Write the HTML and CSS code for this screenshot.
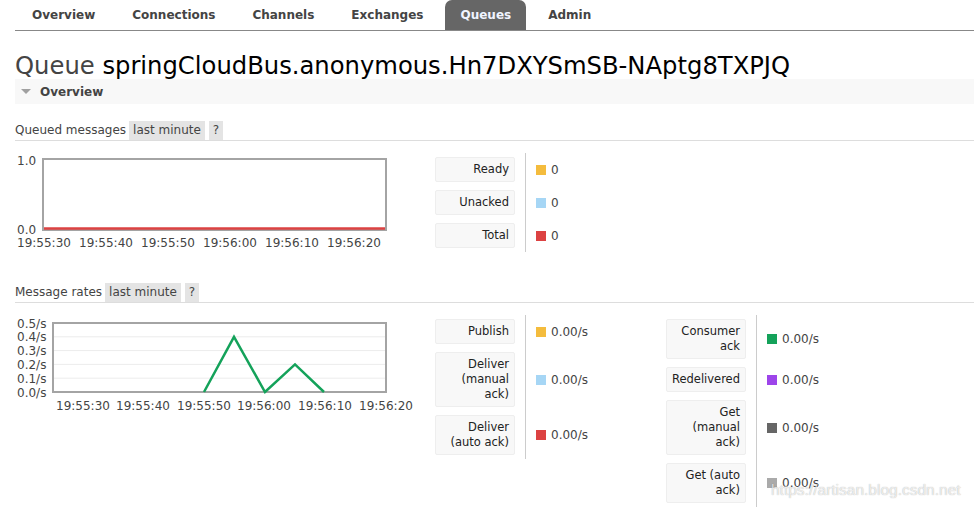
FILE: index.html
```html
<!DOCTYPE html>
<html lang="en">
<head>
<meta charset="utf-8">
<title>Queue springCloudBus.anonymous.Hn7DXYSmSB-NAptg8TXPJQ</title>
<link rel="stylesheet" href="styles.css">
</head>
<body>
<ul class="nav">
  <li class="tab">Overview</li>
  <li class="tab">Connections</li>
  <li class="tab">Channels</li>
  <li class="tab">Exchanges</li>
  <li class="tab tab-active">Queues</li>
  <li class="tab">Admin</li>
</ul>

<h1 class="title">Queue <span class="title-name">springCloudBus.anonymous.Hn7DXYSmSB-NAptg8TXPJQ</span></h1>

<div class="section-bar"><span class="tri"></span>Overview</div>

<div class="subhead"><span>Queued messages</span><span class="pill">last minute</span><span class="pill pill-help">?</span></div>
<div class="panel">
  <div class="chart">
    <svg width="375" height="100" viewBox="0 0 375 100">
      <rect class="frame" x="28" y="6" width="343" height="71"/>
      <line class="line-red" x1="29" y1="75.5" x2="370" y2="75.5"/>
      <text class="axis" x="2" y="12">1.0</text>
      <text class="axis" x="2" y="81">0.0</text>
      <text class="axis" x="2" y="94">19:55:30</text>
      <text class="axis" x="64" y="94">19:55:40</text>
      <text class="axis" x="126" y="94">19:55:50</text>
      <text class="axis" x="188" y="94">19:56:00</text>
      <text class="axis" x="250" y="94">19:56:10</text>
      <text class="axis" x="312" y="94">19:56:20</text>
    </svg>
  </div>
  <div class="stat-table">
    <div class="stat-row"><div class="stat-label">Ready</div><div class="stat-value"><span class="swatch c-yellow"></span>0</div></div>
    <div class="stat-row"><div class="stat-label">Unacked</div><div class="stat-value"><span class="swatch c-blue"></span>0</div></div>
    <div class="stat-row"><div class="stat-label">Total</div><div class="stat-value"><span class="swatch c-red"></span>0</div></div>
  </div>
</div>

<div class="subhead subhead-rates"><span>Message rates</span><span class="pill">last minute</span><span class="pill pill-help">?</span></div>
<div class="panel">
  <div class="chart">
    <svg width="405" height="100" viewBox="0 0 405 100">
      <line class="grid" x1="39" y1="21.8" x2="370" y2="21.8"/>
      <line class="grid" x1="39" y1="35.6" x2="370" y2="35.6"/>
      <line class="grid" x1="39" y1="49.4" x2="370" y2="49.4"/>
      <line class="grid" x1="39" y1="63.2" x2="370" y2="63.2"/>
      <rect class="frame" x="38" y="8" width="333" height="69"/>
      <polyline class="line-green" points="189,77 219,21.8 250,77 280,49.4 309,77"/>
      <text class="axis" x="2" y="12.5">0.5/s</text>
      <text class="axis" x="2" y="26.3">0.4/s</text>
      <text class="axis" x="2" y="40.1">0.3/s</text>
      <text class="axis" x="2" y="53.9">0.2/s</text>
      <text class="axis" x="2" y="67.7">0.1/s</text>
      <text class="axis" x="2" y="81.5">0.0/s</text>
      <text class="axis" x="41" y="94.5">19:55:30</text>
      <text class="axis" x="101" y="94.5">19:55:40</text>
      <text class="axis" x="162" y="94.5">19:55:50</text>
      <text class="axis" x="222" y="94.5">19:56:00</text>
      <text class="axis" x="283" y="94.5">19:56:10</text>
      <text class="axis" x="344" y="94.5">19:56:20</text>
    </svg>
  </div>
  <div class="stat-table">
    <div class="stat-row"><div class="stat-label">Publish</div><div class="stat-value"><span class="swatch c-yellow"></span>0.00/s</div></div>
    <div class="stat-row"><div class="stat-label">Deliver (manual ack)</div><div class="stat-value"><span class="swatch c-blue"></span>0.00/s</div></div>
    <div class="stat-row"><div class="stat-label">Deliver (auto ack)</div><div class="stat-value"><span class="swatch c-red"></span>0.00/s</div></div>
  </div>
  <div class="stat-table">
    <div class="stat-row"><div class="stat-label">Consumer ack</div><div class="stat-value"><span class="swatch c-green"></span>0.00/s</div></div>
    <div class="stat-row"><div class="stat-label">Redelivered</div><div class="stat-value"><span class="swatch c-purple"></span>0.00/s</div></div>
    <div class="stat-row"><div class="stat-label">Get (manual ack)</div><div class="stat-value"><span class="swatch c-dark"></span>0.00/s</div></div>
    <div class="stat-row"><div class="stat-label">Get (auto ack)</div><div class="stat-value"><span class="swatch c-light"></span>0.00/s</div></div>
  </div>
</div>

<div class="watermark">https://artisan.blog.csdn.net</div>
</body>
</html>
```

FILE: styles.css
```css
html, body {
  margin: 0;
  background: #fff;
}
body {
  padding: 0 0 0 15px;
  height: 509px;
  overflow: hidden;
  position: relative;
  font-family: "DejaVu Sans", Verdana, sans-serif;
  font-size: 12px;
  color: #444;
}

/* tabs */
.nav {
  display: flex;
  list-style: none;
  margin: 0;
  padding: 0 0 0 2px;
  height: 30px;
  border-bottom: 1px solid #888;
}
.tab {
  padding: 0 15px;
  margin-right: 7px;
  line-height: 30px;
  font-weight: bold;
  font-size: 12px;
  color: #444;
}
.tab-active {
  background: #666;
  color: #f0f4ff;
  border-radius: 7px 7px 0 0;
}

/* heading */
.title {
  margin: 22px 0 0;
  font-size: 24.25px;
  line-height: 26px;
  font-weight: normal;
  color: #444;
  white-space: nowrap;
}
.title-name {
  color: #000;
}

/* overview bar */
.section-bar {
  height: 25px;
  background: #f8f8f8;
  display: flex;
  align-items: center;
  padding-left: 6px;
  font-weight: bold;
  color: #444;
}
.tri {
  width: 0;
  height: 0;
  border-left: 5px solid transparent;
  border-right: 5px solid transparent;
  border-top: 5px solid #a0a0a0;
  margin-right: 9px;
}

/* sub headers */
.subhead {
  display: flex;
  height: 19px;
  line-height: 19px;
  border-bottom: 1px solid #ddd;
  margin-top: 17px;
  color: #444;
}
.subhead-rates {
  margin-top: 30px;
}
.pill {
  background: #e4e4e4;
  padding: 0 4px;
  margin-left: 3px;
}
.pill-help {
  margin-left: 4px;
}

/* panels */
.panel {
  display: flex;
  align-items: flex-start;
  padding-top: 12px;
}
.chart {
  width: 420px;
  flex: none;
}
.chart svg {
  display: block;
}
.frame {
  fill: none;
  stroke: #a4a4a4;
  stroke-width: 2;
}
.grid {
  stroke: #ececec;
  stroke-width: 1;
}
.line-red {
  stroke: #dc4242;
  stroke-width: 2.5;
}
.line-green {
  fill: none;
  stroke: #14a25a;
  stroke-width: 2.5;
  stroke-linejoin: miter;
}
.axis {
  font-family: "DejaVu Sans", Verdana, sans-serif;
  font-size: 12px;
  fill: #444;
}

/* stat tables */
.stat-table {
  display: flex;
  flex-direction: column;
  flex: none;
}
.stat-row {
  display: flex;
}
.stat-label {
  width: 80px;
  box-sizing: border-box;
  margin: 4px 0;
  padding: 4px 5px 4px 3px;
  border: 1px solid #eee;
  background: #f8f8f8;
  border-radius: 2px;
  text-align: right;
  line-height: 15px;
  font-size: 11.5px;
  color: #222;
}
.stat-value {
  width: 141px;
  box-sizing: border-box;
  margin-left: 10px;
  border-left: 1px solid #ccc;
  padding-left: 10px;
  display: flex;
  align-items: center;
  color: #444;
}
.swatch {
  width: 10px;
  height: 10px;
  margin-right: 5px;
  flex: none;
}
.c-yellow { background: #f4bc3d; }
.c-blue { background: #a6d6f5; }
.c-red { background: #dc4242; }
.c-green { background: #14a25a; }
.c-purple { background: #9d45ea; }
.c-dark { background: #666; }
.c-light { background: #aaa; }

/* watermark overlay */
.watermark {
  position: absolute;
  left: 771px;
  top: 481px;
  font-family: "Liberation Sans", Arial, sans-serif;
  font-size: 15.5px;
  line-height: 18px;
  color: rgba(255, 255, 255, 0.75);
  text-shadow: 0 0 1px rgba(0, 0, 0, 0.35);
  white-space: nowrap;
}
```
